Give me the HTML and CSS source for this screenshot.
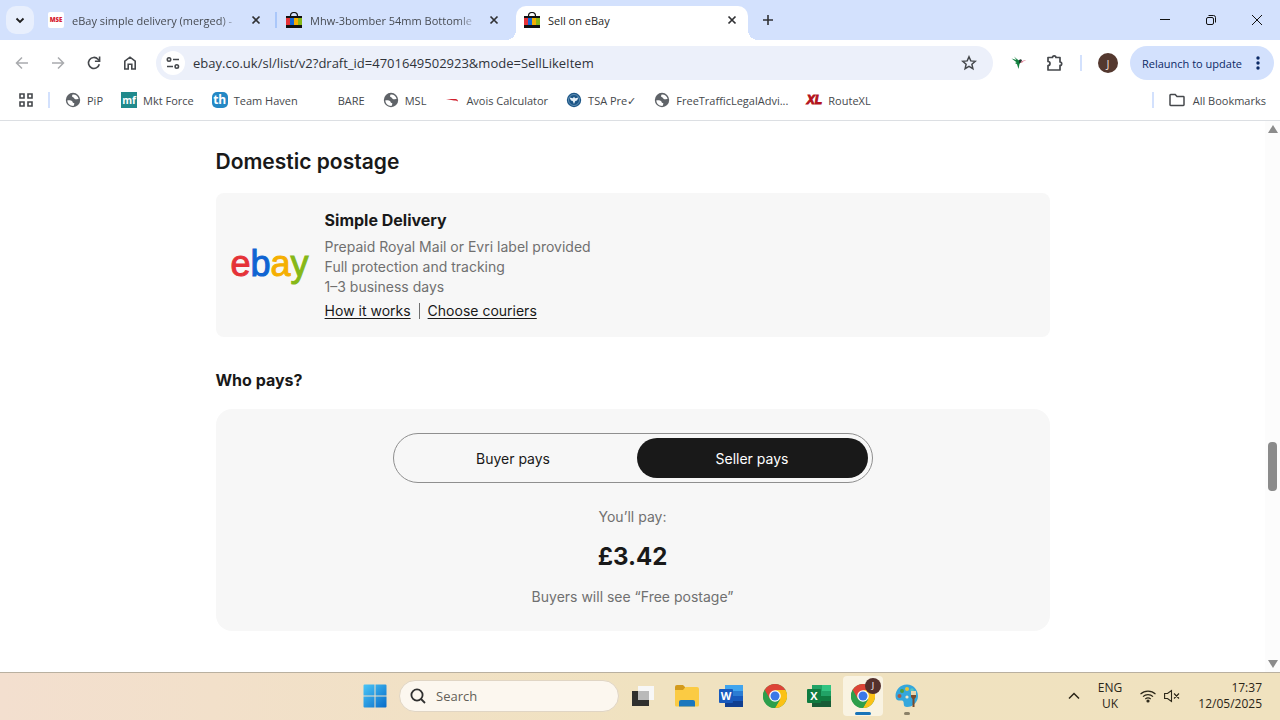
FILE: index.html
```html
<!DOCTYPE html>
<html lang="en">
<head>
    <meta charset="UTF-8">
    <meta name="viewport" content="width=device-width, initial-scale=1.0">
    <title>Sell on eBay</title>
    <link rel="stylesheet" href="styles.css">
</head>
<body>

<!-- Shared icons -->
<svg class="sprite" aria-hidden="true">
    <symbol id="icon-close" viewBox="0 0 16 16"><path d="M4.5 4.5l7 7M11.5 4.5l-7 7" fill="none" stroke="#303134" stroke-width="1.7"/></symbol>
    <symbol id="icon-bag" viewBox="0 0 16 16">
        <path d="M4.5 5V4a3.5 3.5 0 0 1 7 0v1" fill="none" stroke="#111" stroke-width="1.2"/>
        <path d="M0 4h16v12H0z" fill="#111"/>
        <path d="M0 6h4v7H0z" fill="#e53238"/><path d="M4 6h4v7H4z" fill="#1466d8"/>
        <path d="M8 6h4v7H8z" fill="#f5af02"/><path d="M12 6h4v7h-4z" fill="#86b817"/>
    </symbol>
    <symbol id="icon-globe" viewBox="0 0 16 16">
        <circle cx="8" cy="8" r="7.2" fill="#5f6368"/>
        <path d="M2.4 8.2c2.3 0 3.6-.2 4.6.8s.3 1.9 1.7 2.1c1.1.2.7 1.5-.2 2.8C5 14 2.2 11.6 2.4 8.2zM7.6 2.5c-.7 1.2-1 2.4.5 2.8 1.3.3.8 1.7 2.2 2 1.2.3 2.2-.6 3.3-.2C13.2 4.2 10.6 2.2 7.6 2.5z" fill="#fff"/>
    </symbol>
    <symbol id="icon-chrome" viewBox="0 0 24 24">
        <circle cx="12" cy="12" r="12" fill="#2d9f4c"/>
        <path d="M12 12L1.6 6A12 12 0 0 1 22.4 6z" fill="#dd4437"/>
        <path d="M12 6h10.4A12 12 0 0 1 12 24l5.2-9z" fill="#fbc116"/>
        <path d="M1.6 6l5.2 9L12 12V6z" fill="#dd4437"/>
        <path d="M1.6 6l5.2 9 5.2 3 5.2-3L12 24A12 12 0 0 1 1.6 6z" fill="#2d9f4c"/>
        <circle cx="12" cy="12" r="5.8" fill="#fff"/>
        <circle cx="12" cy="12" r="4.5" fill="#3b78e7"/>
    </symbol>
</svg>

<header class="browser">
    <div class="tab-strip">
        <button class="tab-search" aria-label="Search tabs">
            <svg width="16" height="16" viewBox="0 0 16 16"><path d="M4.5 6.5L8 10l3.5-3.5" fill="none" stroke="#1f1f1f" stroke-width="1.8"/></svg>
        </button>
        <div class="tab">
            <span class="favicon mse">MSE</span>
            <span class="tab-title faded">eBay simple delivery (merged) -</span>
            <button class="tab-close" aria-label="Close tab"><svg width="16" height="16"><use href="#icon-close"/></svg></button>
        </div>
        <div class="tab tab-divided">
            <svg class="favicon"><use href="#icon-bag"/></svg>
            <span class="tab-title faded">Mhw-3bomber 54mm Bottomle</span>
            <button class="tab-close" aria-label="Close tab"><svg width="16" height="16"><use href="#icon-close"/></svg></button>
        </div>
        <div class="tab active">
            <svg class="favicon"><use href="#icon-bag"/></svg>
            <span class="tab-title">Sell on eBay</span>
            <button class="tab-close" aria-label="Close tab"><svg width="16" height="16"><use href="#icon-close"/></svg></button>
        </div>
        <button class="new-tab" aria-label="New tab">
            <svg width="16" height="16" viewBox="0 0 16 16"><path d="M8 3v10M3 8h10" stroke="#303134" stroke-width="1.6"/></svg>
        </button>
        <div class="window-controls">
            <button aria-label="Minimise"><svg width="12" height="12"><path d="M1 5.5h10" stroke="#111"/></svg></button>
            <button aria-label="Restore"><svg width="12" height="12" fill="none" stroke="#111"><rect x="1.5" y="3.5" width="7" height="7" rx="1.5"/><path d="M3.5 1.5h5a2 2 0 0 1 2 2v5"/></svg></button>
            <button aria-label="Close"><svg width="12" height="12"><path d="M1 1l10 10M11 1L1 11" stroke="#111"/></svg></button>
        </div>
    </div>

    <div class="toolbar">
        <button class="tool" aria-label="Back"><svg width="16" height="16" viewBox="0 0 16 16" fill="none" stroke="#a9abae" stroke-width="1.5"><path d="M14 8H3M8 2.5L2.5 8 8 13.5"/></svg></button>
        <button class="tool" aria-label="Forward"><svg width="16" height="16" viewBox="0 0 16 16" fill="none" stroke="#a9abae" stroke-width="1.5"><path d="M2 8h11M8 2.5L13.5 8 8 13.5"/></svg></button>
        <button class="tool" aria-label="Reload"><svg width="16" height="16" viewBox="0 0 16 16" fill="none" stroke="#45484c" stroke-width="1.6"><path d="M13.3 9.2A5.5 5.5 0 1 1 12 4.2l1.5 1.6"/><path d="M13.6 1.5v4.8H8.9"/></svg></button>
        <button class="tool" aria-label="Home"><svg width="16" height="16" viewBox="0 0 16 16" fill="none" stroke="#45484c" stroke-width="1.6"><path d="M2.8 14V6.200L8 2.200l5.200 4V14H9.800V9.300H6.200V14z"/></svg></button>
        <div class="omnibox">
            <button class="site-info" aria-label="View site information"><svg width="16" height="16" viewBox="0 0 16 16" fill="none" stroke="#45484c" stroke-width="1.6"><circle cx="4" cy="4.5" r="1.7"/><path d="M8 4.5h6M2 11.5h6"/><circle cx="11.8" cy="11.5" r="1.7"/></svg></button>
            <input class="address" type="text" aria-label="Address" value="ebay.co.uk/sl/list/v2?draft_id=4701649502923&amp;mode=SellLikeItem">
            <button class="star" aria-label="Bookmark this tab"><svg width="16" height="16" viewBox="0 0 16 16"><path d="M8 1.8l1.8 4.1 4.5.4-3.4 3 1 4.4L8 11.4l-3.9 2.3 1-4.4-3.4-3 4.5-.4z" fill="none" stroke="#45484c" stroke-width="1.5"/></svg></button>
        </div>
        <button class="tool extension" aria-label="Hummingbird extension"><svg width="16" height="16" viewBox="0 0 16 16"><path d="M.5 3.500L5.500 5 3 1.500l4.500 3.800L9 5l1.500 1.500L8.500 9l-1 5-1.500-4.800-2-1.200 1.500-.8z" fill="#12803f"/><path d="M8 5.200q1.500-1.700 3 0L10 7.500 8 8z" fill="#26342f"/><path d="M9.500 8q1-3 5.700-2.700-2 .9-2.700.9-.7 1.800-3 1.800z" fill="#df7d96"/></svg></button>
        <button class="tool" aria-label="Extensions"><svg width="18" height="18" viewBox="0 0 18 18"><path d="M2 3.5h4.500a1.700 1.700 0 0 1 3.400 0H14V8a1.700 1.700 0 0 1 0 3.400V16H2v-4.500a2 2 0 0 0 0-4z" fill="none" stroke="#45484c" stroke-width="1.7" stroke-linejoin="round"/></svg></button>
        <span class="divider"></span>
        <button class="avatar" aria-label="Profile">J</button>
        <button class="relaunch">Relaunch to update
            <svg width="4" height="16" viewBox="0 0 4 16" fill="#0b2a66"><circle cx="2" cy="3" r="1.7"/><circle cx="2" cy="8" r="1.7"/><circle cx="2" cy="13" r="1.7"/></svg>
        </button>
    </div>

    <nav class="bookmarks">
        <button class="apps" aria-label="Apps"><svg width="14" height="14" viewBox="0 0 14 14" fill="none" stroke="#45484c" stroke-width="1.6"><path d="M1 1h4v4H1zM9 1h4v4H9zM1 9h4v4H1zM9 9h4v4H9z"/></svg></button>
        <span class="divider"></span>
        <a href="#pip"><svg class="mark"><use href="#icon-globe"/></svg>PiP</a>
        <a href="#mkt"><span class="mark mf">mf</span>Mkt Force</a>
        <a href="#team"><span class="mark th">th</span>Team Haven</a>
        <a href="#bare"><span class="mark"></span>BARE</a>
        <a href="#msl"><svg class="mark"><use href="#icon-globe"/></svg>MSL</a>
        <a href="#avois"><svg class="mark" viewBox="0 0 16 16"><path d="M2 7h9.500c1.500 0 2.500.8 2.500 2.800-1-1.200-2-1.300-4-1.300z" fill="#d0202e"/></svg>Avois Calculator</a>
        <a href="#tsa"><svg class="mark" viewBox="0 0 16 16"><circle cx="8" cy="8" r="7.2" fill="#1c5687"/><circle cx="8" cy="8" r="5.5" fill="none" stroke="#8db4d0" stroke-width=".6"/><path d="M3.5 5.5l3.300.8L8 4.800l1.200 1.500 3.300-.8-1.500 3-1.700.5L8 12l-1.300-3L5 8.500z" fill="#e6f0f7"/></svg>TSA Pre✓</a>
        <a href="#traffic"><svg class="mark"><use href="#icon-globe"/></svg>FreeTrafficLegalAdvi...</a>
        <a href="#routexl"><span class="mark xl">XL</span>RouteXL</a>
        <span class="divider divider-end"></span>
        <button class="all-bookmarks"><svg width="16" height="16" viewBox="0 0 16 16"><path d="M1 3.200q0-.7.700-.7h4.500l1.800 2h6.300q.7 0 .7.700v7.600q0 .7-.7.700H1.700q-.7 0-.7-.7z" fill="none" stroke="#45484c" stroke-width="1.5"/></svg>All Bookmarks</button>
    </nav>
</header>

<div class="viewport">
    <main class="listing">
        <h1>Domestic postage</h1>
        <section class="delivery">
            <div class="ebay-logo" aria-label="ebay"><span class="e">e</span><span class="b">b</span><span class="a">a</span><span class="y">y</span></div>
            <div class="delivery-info">
                <h3>Simple Delivery</h3>
                <p>Prepaid Royal Mail or Evri label provided</p>
                <p>Full protection and tracking</p>
                <p>1–3 business days</p>
                <div class="links">
                    <a href="#how">How it works</a>
                    <a href="#couriers">Choose couriers</a>
                </div>
            </div>
        </section>

        <h2>Who pays?</h2>
        <section class="payer">
            <div class="switch">
                <button class="option">Buyer pays</button>
                <button class="option selected">Seller pays</button>
            </div>
            <p>You’ll pay:</p>
            <strong class="price">£3.42</strong>
            <p>Buyers will see “Free postage”</p>
        </section>
    </main>
    <div class="scrollbar">
        <span class="arrow up"></span>
        <span class="thumb"></span>
        <span class="arrow down"></span>
    </div>
</div>

<footer class="taskbar">
    <div class="taskbar-apps">
        <button class="app" aria-label="Start"><svg width="24" height="24" viewBox="0 0 24 24">
            <defs><linearGradient id="win" gradientUnits="userSpaceOnUse" x1="0" y1="0" x2="24" y2="24"><stop offset="0" stop-color="#4cc8f8"/><stop offset="1" stop-color="#0669c8"/></linearGradient></defs>
            <path d="M1.5 .5h10v11H.5v-10q0-1 1-1zM12.5 .5h10q1 0 1 1v10h-11zM.5 12.5h11v11h-10q-1 0-1-1zM12.5 12.5h11v10q0 1-1 1h-10z" fill="url(#win)"/></svg></button>
        <label class="search">
            <svg width="16" height="16" viewBox="0 0 16 16" fill="none" stroke="#303030" stroke-width="1.8"><circle cx="7" cy="7" r="5.6"/><path d="M11 11l4 4"/></svg>
            <input type="text" placeholder="Search" aria-label="Search">
        </label>
        <button class="app" aria-label="Task view"><svg width="24" height="24" viewBox="0 0 24 24">
            <path d="M1 7h17v15H1z" fill="#30302e"/><path d="M7 2h16v14H7z" fill="#f7f7f7"/><path d="M7 7h11v9H7z" fill="#b9b9b9"/></svg></button>
        <button class="app" aria-label="File Explorer"><svg width="24" height="24" viewBox="0 0 24 24">
            <path d="M0 3q0-2 2-2h6l2 2v5H0z" fill="#d39a1c"/><path d="M0 6h8l2.5-3H22q2 0 2 2v16q0 1.5-1.5 1.5h-21Q0 22.5 0 21z" fill="#fbcb43"/><path d="M4 22.5V18q0-2 2-2h12q2 0 2 2v4.5z" fill="#1a77bd"/></svg></button>
        <button class="app" aria-label="Word"><svg width="24" height="24" viewBox="0 0 24 24">
            <path d="M6 1h18v6H6z" fill="#41a5ee"/><path d="M6 7h18v5H6z" fill="#2b7cd3"/><path d="M6 12h18v5H6z" fill="#185abd"/><path d="M6 17h18v6H6z" fill="#103f91"/><rect x="0" y="5" width="14" height="14" rx="1" fill="#185abd"/><text x="7" y="16" class="app-letter">W</text></svg></button>
        <button class="app" aria-label="Chrome"><svg width="24" height="24"><use href="#icon-chrome"/></svg></button>
        <button class="app" aria-label="Excel"><svg width="24" height="24" viewBox="0 0 24 24">
            <path d="M5 1h10v11H5z" fill="#21a366"/><path d="M15 1h9v6h-9z" fill="#33c481"/><path d="M15 7h9v5h-9z" fill="#21a366"/><path d="M5 12h19v5H5z" fill="#107c41"/><path d="M5 17h19v6H5z" fill="#185c37"/><rect x="0" y="5" width="14" height="14" rx="1" fill="#107c41"/><text x="7" y="16" class="app-letter">X</text></svg></button>
        <button class="app running focused" aria-label="Chrome, profile J"><svg width="24" height="24"><use href="#icon-chrome"/></svg><span class="badge">J</span></button>
        <button class="app running" aria-label="Paint"><svg width="24" height="24" viewBox="0 0 24 24">
            <path d="M12 .5C5 .5.5 6 .5 12c0 3 1.500 4.500 3.500 4.500 2.500 0 4-.5 4.500 1.500.6 2-.5 5 3.500 5 6 0 11-5 11-11S18.500.5 12 .5z" fill="#35a7dc"/>
            <circle cx="12" cy="5" r="2" fill="#e8c334"/><circle cx="7" cy="7" r="2" fill="#4f9d3b"/><circle cx="4.5" cy="12" r="2" fill="#a75a45"/><circle cx="17" cy="6" r="1.8" fill="#57c6c0"/><circle cx="12" cy="13" r="1.6" fill="#f3e7c4"/>
            <path d="M16 7h5v6h-5z" fill="#e9d6ae"/><path d="M16 11h5v2l-1.500 2v8h-2v-8L16 13z" fill="#7b4a2b"/></svg></button>
    </div>
    <div class="tray">
        <button aria-label="Show hidden icons"><svg width="12" height="12" viewBox="0 0 12 12"><path d="M1 8.5l5-5 5 5" fill="none" stroke="#2b2618" stroke-width="1.5"/></svg></button>
        <button class="language">ENG<br>UK</button>
        <button class="network" aria-label="Network and sound">
            <svg width="16" height="16" viewBox="0 0 16 16" fill="none" stroke="#2b2618" stroke-width="1.2"><path d="M.5 6.2a10.6 10.6 0 0 1 15 0M3 8.7a7 7 0 0 1 10 0M5.3 11a4 4 0 0 1 5.4 0"/><circle cx="8" cy="13" r="1" fill="#2b2618"/></svg>
            <svg width="16" height="16" viewBox="0 0 16 16" fill="none" stroke="#2b2618" stroke-width="1.1"><path d="M.6 5.5h2.900L7.500 2.500v11l-4-3H.6zM10 5.500l5 5M15 5.500l-5 5"/></svg>
        </button>
        <time class="clock">17:37<br>12/05/2025</time>
    </div>
</footer>

</body>
</html>
```

FILE: styles.css
```css
* {
    box-sizing: border-box;
}
body {
    display: flex;
    flex-direction: column;
    height: 100vh;
    margin: 0;
    overflow: hidden;
    font-family: "Open Sans", "Noto Sans", sans-serif;
    font-size: 11px;
    color: #1f1f1f;
    background: #fff;
}
button, input {
    margin: 0;
    padding: 0;
    border: 0;
    background: none;
    font: inherit;
    color: inherit;
}
button {
    display: flex;
    align-items: center;
    justify-content: center;
}
svg {
    flex: none;
}
.sprite {
    position: absolute;
    width: 0;
    height: 0;
}

/* Tabs */
.browser {
    flex: none;
    border-bottom: 1px solid #dcdfe3;
}
.tab-strip {
    display: flex;
    align-items: flex-end;
    height: 40px;
    background: #d3e1fd;
}
.tab-search {
    align-self: center;
    width: 28px;
    height: 28px;
    margin: 0 6px;
    border-radius: 10px;
    background: #e8effd;
}
.tab {
    position: relative;
    display: flex;
    align-items: center;
    gap: 8px;
    flex: 0 1 238px;
    min-width: 0;
    height: 34px;
    padding: 0 14px 6px 8px;
    color: #474b52;
}
.tab-divided::before {
    content: "";
    position: absolute;
    left: -3px;
    top: 6px;
    width: 2px;
    height: 16px;
    background: #aac7fa;
}
.tab.active {
    flex-basis: 232px;
    padding-right: 8px;
    border-radius: 10px 10px 0 0;
    background: #fff;
    color: #1f1f1f;
}
.tab.active::before,
.tab.active::after {
    content: "";
    position: absolute;
    bottom: 0;
    width: 10px;
    height: 10px;
}
.tab.active::before {
    left: -10px;
    background: radial-gradient(circle at 0 0, transparent 10px, #fff 10px);
}
.tab.active::after {
    right: -10px;
    background: radial-gradient(circle at 100% 0, transparent 10px, #fff 10px);
}
.favicon {
    flex: none;
    width: 16px;
    height: 16px;
}
.mse {
    border-radius: 2px;
    background: #fff;
    color: #d5202f;
    font-size: 6px;
    font-weight: 800;
    line-height: 16px;
    text-align: center;
}
.tab-title {
    flex: 1;
    overflow: hidden;
    white-space: nowrap;
}
.faded {
    mask-image: linear-gradient(to right, #000 88%, transparent);
}
.tab-close {
    flex: none;
    width: 16px;
}
.new-tab {
    width: 28px;
    height: 40px;
    margin-left: 6px;
}
.window-controls {
    display: flex;
    margin-left: auto;
}
.window-controls button {
    width: 46px;
    height: 40px;
}

/* Toolbar */
.toolbar {
    display: flex;
    align-items: center;
    padding: 6px 6px 6px 4px;
}
.tool {
    width: 36px;
    height: 34px;
}
.omnibox {
    display: flex;
    align-items: center;
    flex: 1;
    height: 34px;
    margin-left: 8px;
    padding: 0 12px 0 5px;
    border-radius: 17px;
    background: #ecf0fa;
}
.site-info {
    width: 24px;
    height: 24px;
    border-radius: 12px;
    background: #fff;
}
.address {
    flex: 1;
    margin: 0 8px;
    font-size: 13px;
    color: #30343a;
    outline: 0;
}
.star {
    width: 24px;
}
.extension {
    margin-left: 8px;
}
.divider {
    width: 2px;
    height: 16px;
    background: #d3e1fd;
}
.toolbar .divider {
    margin: 0 16px 0 7px;
}
.avatar {
    width: 20px;
    height: 20px;
    border-radius: 10px;
    background: #54382f;
    color: #f0dcd4;
}
.relaunch {
    gap: 14px;
    height: 34px;
    margin-left: 12px;
    padding: 0 14px 0 12px;
    border-radius: 17px;
    background: #d3e1fd;
    color: #0b2a66;
    white-space: nowrap;
}

/* Bookmarks bar */
.bookmarks {
    display: flex;
    align-items: center;
    gap: 18px;
    height: 34px;
    padding: 0 14px 6px 19px;
    color: #45484c;
    white-space: nowrap;
}
.bookmarks .divider {
    margin: 0 -3px;
}
.bookmarks a {
    display: flex;
    align-items: center;
    gap: 6px;
    color: inherit;
    text-decoration: none;
}
.mark {
    flex: none;
    width: 16px;
    height: 16px;
    font-weight: 700;
    line-height: 16px;
    text-align: center;
}
.mf {
    background: #208a8c;
    color: #fff;
    font-size: 10px;
}
.th {
    border-radius: 5px;
    background: #2488c5;
    color: #fff;
    font-size: 12px;
}
.xl {
    color: #b4131c;
    font-family: "Liberation Sans", Arial, sans-serif;
    font-size: 12px;
    font-style: italic;
    -webkit-text-stroke: 1px #b4131c;
}
.bookmarks .divider-end {
    margin-left: auto;
}
.all-bookmarks {
    gap: 8px;
}

/* Listing page */
.viewport {
    display: flex;
    flex: 1;
    min-height: 0;
    font-family: Inter, "Liberation Sans", sans-serif;
    color: #191919;
}
.listing {
    flex: 1;
    max-width: 834px;
    margin: 0 auto;
    padding-top: 25px;
}
.listing p {
    margin: 0;
    color: #707070;
    font-size: 14px;
    line-height: 20px;
}
h1, h2, h3 {
    margin: 0;
    font-weight: 700;
}
h1 {
    font-size: 21px;
    font-weight: 600;
    line-height: 32px;
}
h2 {
    margin-top: 31px;
    font-size: 16px;
    line-height: 24px;
}
h3 {
    margin-bottom: 5px;
    font-size: 16px;
    line-height: 24px;
}
.delivery {
    display: flex;
    align-items: center;
    gap: 16px;
    margin-top: 15px;
    padding: 15px 15px 18px;
    border-radius: 8px;
    background: #f7f7f7;
}
.ebay-logo {
    font-family: "Liberation Sans", Arial, sans-serif;
    font-size: 36px;
    line-height: 40px;
    -webkit-text-stroke: 1px;
}
.e { color: #e53238; }
.b { color: #0f64d2; }
.a { color: #f5af02; }
.y { color: #86b817; }
.links {
    display: flex;
    margin-top: 6px;
    font-size: 14px;
    line-height: 16px;
}
.links a {
    color: #191919;
    text-underline-offset: 2px;
}
.links a + a {
    margin-left: 8px;
    padding-left: 8px;
    border-left: 1px solid #707070;
}
.payer {
    display: flex;
    flex-direction: column;
    align-items: center;
    margin-top: 17px;
    padding: 24px;
    border-radius: 16px;
    background: #f7f7f7;
}
.switch {
    display: flex;
    gap: 8px;
    width: 100%;
    max-width: 480px;
    margin-bottom: 24px;
    padding: 4px;
    border: 1px solid #8f8f8f;
    border-radius: 25px;
}
.option {
    flex: 1;
    height: 40px;
    border-radius: 20px;
    font-size: 14px;
}
.selected {
    background: #191919;
    color: #fff;
}
.price {
    margin: 12px 0;
    font-size: 24px;
    font-weight: 700;
    line-height: 36px;
}

/* Scrollbar */
.scrollbar {
    display: flex;
    flex-direction: column;
    align-items: center;
    width: 15px;
    padding: 4px 0;
    background: #fcfcfc;
}
.arrow {
    border: 5px solid transparent;
}
.up {
    border-top: 0;
    border-bottom: 8px solid #8b8b8b;
}
.down {
    margin-top: auto;
    border-bottom: 0;
    border-top: 8px solid #8b8b8b;
}
.thumb {
    width: 9px;
    height: 49px;
    margin-top: 309px;
    border-radius: 4px;
    background: #8b8b8b;
}

/* Taskbar */
.taskbar {
    display: grid;
    grid-template-columns: 1fr auto 1fr;
    flex: none;
    height: 48px;
    padding: 0 0 1px 2px;
    border-top: 1px solid #b9b0a0;
    background: linear-gradient(to right, #f3dfcf, #f0e2c0 50%, #f0e2bf);
}
.taskbar-apps {
    grid-column: 2;
    display: flex;
    align-items: center;
    gap: 4px;
}
.app {
    position: relative;
    width: 40px;
    height: 40px;
    border-radius: 4px;
}
.app-letter {
    fill: #fff;
    font-size: 11px;
    font-weight: 700;
    text-anchor: middle;
}
.search {
    display: flex;
    align-items: center;
    gap: 10px;
    width: 220px;
    height: 32px;
    padding: 0 10px;
    border: 1px solid #e0d5c4;
    border-radius: 16px;
    background: #fcf7ef;
}
.search input {
    flex: 1;
    min-width: 0;
    font-size: 13px;
}
.search input::placeholder {
    color: #635f58;
}
.focused {
    background: #f9f3e2;
}
.running::after {
    content: "";
    position: absolute;
    bottom: 1px;
    left: 17px;
    width: 6px;
    height: 3px;
    border-radius: 2px;
    background: #8b8168;
}
.focused::after {
    left: 12px;
    width: 16px;
    background: #1873b8;
}
.badge {
    position: absolute;
    top: 2px;
    right: 2px;
    width: 16px;
    height: 16px;
    border-radius: 8px;
    background: #54302c;
    color: #fff;
    font-size: 9px;
    line-height: 16px;
}
.tray {
    display: flex;
    align-items: center;
    justify-content: flex-end;
    gap: 18px;
    padding-right: 18px;
    color: #2b2618;
    font-size: 12px;
    line-height: 16px;
}
.network {
    gap: 8px;
}
.clock {
    text-align: right;
}
```
